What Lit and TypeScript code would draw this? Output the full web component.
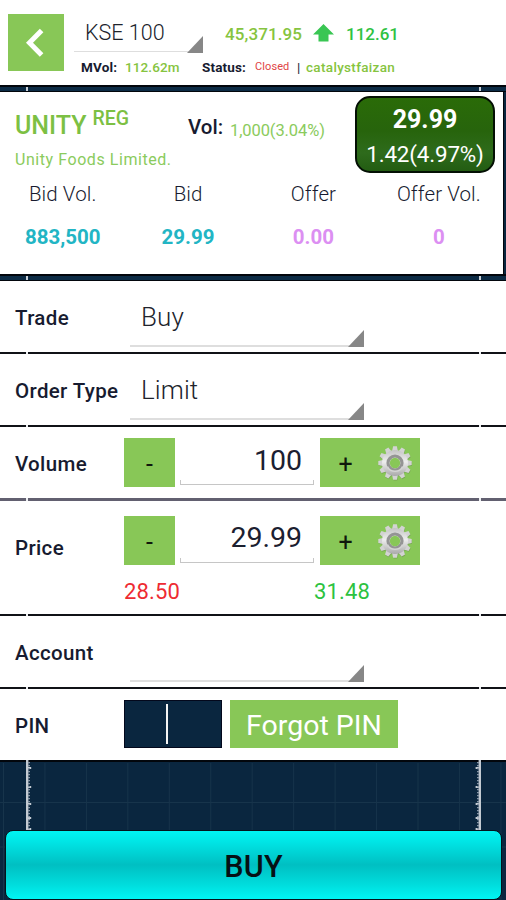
import { LitElement, html, css, svg } from "lit";
import { customElement, property } from "lit/decorators.js";

const gearTeeth = Array.from({ length: 12 }, (_, i) => i * 30);

@customElement("gear-icon")
class GearIcon extends LitElement {
  static styles = css`
    :host { display: block; width: 36px; height: 36px; }
    svg { display: block; }
  `;
  render() {
    return html`<svg width="36" height="36" viewBox="-18 -18 36 36">
      <defs>
        <linearGradient id="metal" x1="0" y1="0" x2="0" y2="1">
          <stop offset="0" stop-color="#c4c4c4" />
          <stop offset="0.45" stop-color="#eeeeee" />
          <stop offset="1" stop-color="#a9a9a9" />
        </linearGradient>
      </defs>
      <g fill="#6f8f55" opacity="0.6" transform="translate(0.4 1)">
        <circle r="12.6" />
        ${gearTeeth.map((a) => svg`<path d="M-2.7 -12 L-1.8 -16.6 H1.8 L2.7 -12Z" transform="rotate(${a})" />`)}
      </g>
      <g fill="#d3d3d3">
        ${gearTeeth.map((a) => svg`<path d="M-2.9 -12 L-1.9 -16.7 H1.9 L2.9 -12Z" transform="rotate(${a})" />`)}
      </g>
      <circle r="13" fill="url(#metal)" />
      <circle r="7" fill="none" stroke="#949494" stroke-width="3.2" />
      <path d="M-7.6 3.5 A8.4 8.4 0 0 0 7.6 3.5" fill="none" stroke="#d5d5d5" stroke-width="1.6" />
      <circle r="5.2" fill="#88c757" />
    </svg>`;
  }
}

@customElement("spinner-field")
class SpinnerField extends LitElement {
  @property() value = "";
  static styles = css`
    :host {
      display: flex;
      align-items: flex-end;
      justify-content: space-between;
      box-sizing: border-box;
      border-bottom: 2px solid #dedede;
      color: #20232c;
    }
    .value { align-self: center; white-space: nowrap; }
    svg { display: block; flex: none; margin-bottom: -2px; }
  `;
  render() {
    return html`<span class="value">${this.value}</span>
      <svg width="16" height="17" viewBox="0 0 16 17"><path d="M16 0V17H0Z" fill="#878787" /></svg>`;
  }
}

@customElement("stepper-field")
class StepperField extends LitElement {
  @property() value = "";
  static styles = css`
    :host { display: flex; height: 49px; }
    .btn {
      display: flex; align-items: center; justify-content: center;
      width: 51px; height: 49px; background: #88c757; color: #10180c;
      font-size: 25px; line-height: 49px; box-sizing: border-box; padding-top: 3px;
    }
    .edit {
      position: relative;
      width: 134px; height: 47px; margin: 0 6px 0 5px;
      box-sizing: border-box; padding-right: 12px;
      display: flex; align-items: flex-start; justify-content: flex-end;
      font-size: 28.5px; line-height: var(--edit-line, 46px); color: #1b2030;
    }
    .edit::after {
      content: ""; position: absolute; left: 0; right: 0; bottom: 0; height: 5px;
      border: 1.5px solid #c6c6c6; border-top: 0; box-sizing: border-box;
    }
    .gear { width: 49px; padding: 0 0 0 0; }
    gear-icon { margin-left: -2px; }
  `;
  render() {
    return html`<div class="btn">-</div>
      <div class="edit">${this.value}</div>
      <div class="btn">+</div>
      <div class="btn gear"><gear-icon></gear-icon></div>`;
  }
}

const rulerTicks = [768, 787, 804, 818, 829];

@customElement("app-root")
class AppRoot extends LitElement {
  static styles = css`
    :host {
      display: block; width: 506px; height: 900px; overflow: hidden;
      font-family: Roboto, "Liberation Sans", sans-serif;
      background: #0a263f; color: #171b30;
    }
    .screen { display: flex; flex-direction: column; height: 900px; }
    .header {
      height: 85px; box-sizing: border-box; background: #fff;
      display: flex; padding: 14px 0 0 8px;
    }
    .back { width: 56px; height: 57px; background: #88c757; flex: none; }
    .back svg { display: block; }
    .info { margin-left: 10px; }
    .line { display: flex; align-items: center; white-space: nowrap; }
    .line1 { height: 38px; }
    .index { width: 129px; height: 37px; font-size: 21.5px; font-weight: 300; padding-left: 11px; border-bottom-width: 1.5px; }
    .points { margin-left: 22px; width: 88px; font-size: 17px; font-weight: 500; color: #86c440; letter-spacing: 0.1px; line-height: 40px; padding-top: 1px; }
    .change { margin-left: 12px; font-size: 17px; font-weight: 500; color: #2fc242; line-height: 40px; padding-top: 1px; }
    .line2 { height: 30px; font-size: 13.5px; padding-left: 7px; }
    .line2 > * { flex: none; }
    .mvol { width: 44px; font-weight: 700; letter-spacing: 0.15px; }
    .mvolv { width: 77px; font-weight: 500; color: #86c440; letter-spacing: 0.1px; }
    .status { width: 53px; font-weight: 700; letter-spacing: 0.15px; }
    .closed { width: 42px; font-size: 11px; color: #e04444; letter-spacing: 0.1px; padding-bottom: 1px; }
    .bar { width: 9px; }
    .user { font-weight: 500; color: #86c440; letter-spacing: 0.32px; }

    .band { flex: none; height: 7px; box-sizing: border-box; border: solid #02060c; border-width: 2px 0 1px;
      background:
        linear-gradient(#c9d0d8, #c9d0d8) 26px 0 / 2px 100% no-repeat,
        linear-gradient(#c9d0d8, #c9d0d8) 479px 0 / 2px 100% no-repeat,
        #0c2b45; background-origin: border-box; background-clip: border-box; }
    .quote { height: 182px; width: 504px; box-sizing: border-box; background: #fff; border-right: 1px solid #02060c; }
    .top { display: flex; height: 85px; white-space: nowrap; }
    .name { width: 173px; padding-left: 15px; flex: none; }
    .symbol { display: flex; height: 53px; padding-top: 15px; box-sizing: border-box; color: #7cc043; font-weight: 500; font-size: 25px; line-height: 38px; }
    .symbol sup { margin-left: 6px; font-size: 19.5px; line-height: 24px; vertical-align: baseline; }
    .company { font-size: 16px; line-height: 30px; color: #8bcb5d; letter-spacing: 0.56px; }
    .vol { display: flex; width: 167px; flex: none; }
    .vollabel { width: 42px; font-size: 20.5px; font-weight: 500; line-height: 71px; }
    .volvalue { font-size: 16.5px; line-height: 77px; color: #8bcb5d; letter-spacing: -0.1px; }
    .badge {
      width: 140px; height: 77px; margin-top: 4px; box-sizing: border-box; flex: none;
      border: 2px solid #041004; border-radius: 15px; text-align: center; color: #fff;
      background: linear-gradient(#2a6b08, #27640c 45%, #2e6b1c 75%, #235c12);
    }
    .last { font-size: 25px; font-weight: 700; line-height: 34px; padding-top: 5px; }
    .diff { font-size: 22.4px; line-height: 35px; letter-spacing: -0.15px; }
    .depth { display: grid; grid-template-columns: repeat(4, 125.4px); text-align: center; white-space: nowrap; font-size: 20.5px; }
    .depth > div { line-height: 35px; }
    .depth .h { font-weight: 300; letter-spacing: 0.1px; }
    .depth .v { font-weight: 700; line-height: 51px; color: #22b5c4; }
    .depth .o { color: #dc8ff2; }

    .row { flex: none; box-sizing: border-box; background: #fff; display: flex; }
    .label { flex: none; padding-left: 15px; width: 109px; font-size: 20.5px; font-weight: 500; line-height: 74px; letter-spacing: 0.35px; white-space: nowrap; }
    .h71 { height: 71px; }
    .price { height: 113px; }
    .price .label { line-height: 95px; }
    .sep { flex: none; height: 2px; background:
      linear-gradient(#eef0f3, #eef0f3) 26px 0 / 2px 100% no-repeat,
      linear-gradient(#eef0f3, #eef0f3) 479px 0 / 2px 100% no-repeat, #101217; }
    .sep.soft { height: 3px; background-color: #626070; }
    .choice { margin-left: 6px; width: 234px; height: 66px; padding-left: 11px; padding-top: 8px; font-size: 26px; font-weight: 300; letter-spacing: 0.1px; }
    .volstep { margin-top: 11px; }
    .prices { margin-top: 15px; --edit-line: 43px; }
    .limits { display: flex; margin-top: 9px; font-size: 22px; line-height: 35px; letter-spacing: 0.15px; }
    .low { width: 190px; color: #ee2b32; }
    .high { color: #2cc23f; }
    .pin { display: flex; gap: 8px; margin-top: 11px; height: 48px; }
    .pinbox { width: 98px; box-sizing: border-box; border: 1px solid #03081c; background: #0a263f; padding: 3px 0 3px 41px; }
    .caret { width: 2px; height: 40px; background: #f4f4f4; }
    .forgot { width: 168px; background: #88c757; color: #fff; font-size: 28.5px; line-height: 51px; text-align: center; white-space: nowrap; }
    .footer {
      flex: 1; position: relative; border-top: 2px solid #02060c; box-sizing: border-box;
      display: flex; flex-direction: column; justify-content: flex-end; padding: 0 4px 0 5px;
      background: #0a263f;
    }
    .grid { position: absolute; left: 0; top: -2px; }
    .buy {
      position: relative; height: 70px; box-sizing: border-box; border: 1px solid #03141c; border-radius: 8px;
      background: linear-gradient(#00f4f2, #00e6e6 15%, #00bfc2 50%, #00dede 80%, #00f6f4);
      color: #061014; font-size: 30.5px; font-weight: 500; line-height: 71px; text-align: center; letter-spacing: 0.2px;
    }
  `;

  render() {
    return html`<div class="screen">
      <div class="header">
        <div class="back">
          <svg width="56" height="57" viewBox="0 0 56 57"><path d="M33.6 16.6L21.5 28.8L33.6 41" fill="none" stroke="#fff" stroke-width="5" /></svg>
        </div>
        <div class="info">
          <div class="line line1">
            <spinner-field class="index" value="KSE 100"></spinner-field>
            <span class="points">45,371.95</span>
            <svg width="21" height="18" viewBox="0 0 21 18"><path d="M10.5 0L21 10.5H15.5V17.5H5.5V10.5H0Z" fill="#39c653" /></svg>
            <span class="change">112.61</span>
          </div>
          <div class="line line2">
            <span class="mvol">MVol:</span><span class="mvolv">112.62m</span>
            <span class="status">Status:</span><span class="closed">Closed</span>
            <span class="bar">|</span><span class="user">catalystfaizan</span>
          </div>
        </div>
      </div>
      <div class="band"></div>
      <div class="quote">
        <div class="top">
          <div class="name">
            <div class="symbol">UNITY<sup>REG</sup></div>
            <div class="company">Unity Foods Limited.</div>
          </div>
          <div class="vol"><span class="vollabel">Vol:</span><span class="volvalue">1,000(3.04%)</span></div>
          <div class="badge"><div class="last">29.99</div><div class="diff">1.42(4.97%)</div></div>
        </div>
        <div class="depth">
          <div class="h">Bid Vol.</div><div class="h">Bid</div><div class="h">Offer</div><div class="h">Offer Vol.</div>
          <div class="v">883,500</div><div class="v">29.99</div><div class="v o">0.00</div><div class="v o">0</div>
        </div>
      </div>
      <div class="band"></div>
      <div class="row h71"><div class="label">Trade</div><spinner-field class="choice" value="Buy"></spinner-field></div>
      <div class="sep"></div>
      <div class="row h71"><div class="label">Order Type</div><spinner-field class="choice" value="Limit"></spinner-field></div>
      <div class="sep"></div>
      <div class="row h71"><div class="label">Volume</div><stepper-field class="volstep" value="100"></stepper-field></div>
      <div class="sep soft"></div>
      <div class="row price">
        <div class="label">Price</div>
        <div>
          <stepper-field class="prices" value="29.99"></stepper-field>
          <div class="limits"><span class="low">28.50</span><span class="high">31.48</span></div>
        </div>
      </div>
      <div class="sep"></div>
      <div class="row h71"><div class="label">Account</div><spinner-field class="choice"></spinner-field></div>
      <div class="sep"></div>
      <div class="row h71">
        <div class="label">PIN</div>
        <div class="pin"><div class="pinbox"><div class="caret"></div></div><div class="forgot">Forgot PIN</div></div>
      </div>
      <div class="footer">
        <svg class="grid" width="506" height="140" viewBox="0 760 506 140">
          <g stroke="#17344b" stroke-width="1">
            ${Array.from({ length: 13 }, (_, i) => svg`<path d="M${3.5 + i * 41.45} 763V900" />`)}
            <path d="M0 802.5H506M0 847H506" />
          </g>
          <g fill="#c3cad2">
            <rect x="26" y="760" width="2.4" height="71" />
            <rect x="478.6" y="760" width="2.4" height="71" />
            ${rulerTicks.map((y) => svg`<rect x="28" y=${y - 1} width="3.2" height="2" /><rect x="475.6" y=${y - 1} width="3.2" height="2" />`)}
          </g>
          <g stroke="#8795a5" stroke-width="2" stroke-dasharray="1.2 1.8">
            <path d="M29 762V831M478 762V831" />
          </g>
        </svg>
        <div class="buy">BUY</div>
      </div>
    </div>`;
  }
}
